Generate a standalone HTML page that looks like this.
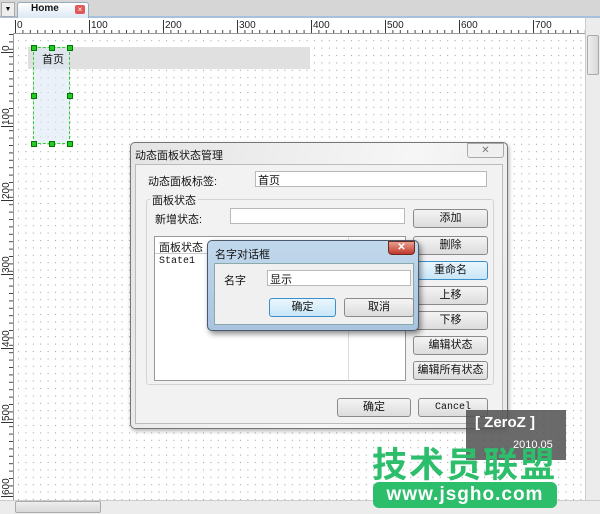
<!DOCTYPE html>
<html><head><meta charset="utf-8"><style>
*{margin:0;padding:0;box-sizing:border-box}
body{width:600px;height:514px;overflow:hidden;position:relative;background:#fff;font-family:"Liberation Sans","Noto Sans CJK SC",sans-serif;font-size:11px;color:#111}
.a{position:absolute}
.btn{position:absolute;border:1px solid #8a8a8a;border-radius:3px;background:linear-gradient(#f4f4f4,#dcdcdc);text-align:center;font-size:11px;line-height:17px}
.inp{position:absolute;background:#fff;border:1px solid #b9b9b9}
</style></head><body>
<div class="a" style="left:0;top:0;width:600px;height:17px;background:#d6d6d6"></div>
<div class="a" style="left:0;top:16px;width:600px;height:2px;background:#a9c0dc"></div>
<div class="a" style="left:1px;top:2px;width:14px;height:15px;background:#eee;border:1px solid #aaa;font-size:7px;text-align:center;line-height:14px">▼</div>
<div class="a" style="left:17px;top:2px;width:72px;height:16px;background:linear-gradient(#fff,#dce8f5);border:1px solid #9ab;border-bottom:none;border-radius:3px 3px 0 0"></div>
<div class="a" style="left:31px;top:3px;font-weight:bold;font-size:10px">Home</div>
<div class="a" style="left:75px;top:5px;width:10px;height:9px;background:#e05a5a;border-radius:2px;color:#fff;font-size:8px;line-height:9px;text-align:center">×</div>
<svg class="a" style="left:0;top:18px" width="600" height="496">
<rect x="0" y="0" width="600" height="16" fill="#fff"/>
<rect x="0" y="0" width="14" height="496" fill="#fff"/>
<line x1="14" y1="15.5" x2="585" y2="15.5" stroke="#999"/>
<line x1="13.5" y1="15" x2="13.5" y2="482" stroke="#999"/>
<g stroke="#333">
<line x1="15.5" y1="2" x2="15.5" y2="15"/><line x1="89.5" y1="2" x2="89.5" y2="15"/><line x1="163.5" y1="2" x2="163.5" y2="15"/><line x1="237.5" y1="2" x2="237.5" y2="15"/><line x1="311.5" y1="2" x2="311.5" y2="15"/><line x1="385.5" y1="2" x2="385.5" y2="15"/><line x1="459.5" y1="2" x2="459.5" y2="15"/><line x1="533.5" y1="2" x2="533.5" y2="15"/>
<line x1="1" y1="34.5" x2="13" y2="34.5"/><line x1="1" y1="108.5" x2="13" y2="108.5"/><line x1="1" y1="182.5" x2="13" y2="182.5"/><line x1="1" y1="256.5" x2="13" y2="256.5"/><line x1="1" y1="330.5" x2="13" y2="330.5"/><line x1="1" y1="404.5" x2="13" y2="404.5"/><line x1="1" y1="478.5" x2="13" y2="478.5"/>
</g>
<defs>
<pattern id="tx" x="15" y="0" width="7.4" height="16" patternUnits="userSpaceOnUse"><line x1="0.5" y1="12" x2="0.5" y2="15" stroke="#444"/></pattern>
<pattern id="ty" x="0" y="16" width="14" height="7.4" patternUnits="userSpaceOnUse"><line x1="9" y1="0.5" x2="13" y2="0.5" stroke="#444"/></pattern>
<pattern id="dots" x="15" y="34" width="7.4" height="7.4" patternUnits="userSpaceOnUse"><rect x="3" y="3" width="1" height="1" fill="#999"/></pattern>
</defs>
<rect x="15" y="0" width="570" height="16" fill="url(#tx)"/>
<rect x="0" y="16" width="14" height="466" fill="url(#ty)"/>
<rect x="14" y="16" width="571" height="466" fill="url(#dots)"/>
<g font-size="10" fill="#222" font-family="Liberation Sans">
<text x="17" y="10">0</text><text x="91" y="10">100</text><text x="165" y="10">200</text><text x="239" y="10">300</text><text x="313" y="10">400</text><text x="387" y="10">500</text><text x="461" y="10">600</text><text x="535" y="10">700</text>
<text transform="translate(9,33) rotate(-90)">0</text>
<text transform="translate(9,107) rotate(-90)">100</text>
<text transform="translate(9,181) rotate(-90)">200</text>
<text transform="translate(9,255) rotate(-90)">300</text>
<text transform="translate(9,329) rotate(-90)">400</text>
<text transform="translate(9,403) rotate(-90)">500</text>
<text transform="translate(9,477) rotate(-90)">600</text>
</g>
</svg>
<div class="a" style="left:585px;top:18px;width:15px;height:482px;background:#ececec;border-left:1px solid #ccc"></div>
<div class="a" style="left:587px;top:35px;width:12px;height:40px;background:linear-gradient(90deg,#eee,#d8d8d8);border:1px solid #aaa;border-radius:2px"></div>
<div class="a" style="left:0;top:500px;width:600px;height:14px;background:#ececec;border-top:1px solid #ccc"></div>
<div class="a" style="left:15px;top:501px;width:86px;height:12px;background:linear-gradient(#eee,#d8d8d8);border:1px solid #aaa;border-radius:2px"></div>
<div class="a" style="left:28px;top:47px;width:282px;height:22px;background:#e0e0e0"></div>
<div class="a" style="left:33px;top:47px;width:37px;height:97px;background:rgba(220,232,245,.6);border:1px dashed #3c3"></div>
<div class="a" style="left:42px;top:51px;font-size:11px">首页</div>
<div class="a" style="left:31px;top:45px;width:6px;height:6px;background:#2c2;border:1px solid #070"></div>
<div class="a" style="left:49px;top:45px;width:6px;height:6px;background:#2c2;border:1px solid #070"></div>
<div class="a" style="left:67px;top:45px;width:6px;height:6px;background:#2c2;border:1px solid #070"></div>
<div class="a" style="left:31px;top:93px;width:6px;height:6px;background:#2c2;border:1px solid #070"></div>
<div class="a" style="left:67px;top:93px;width:6px;height:6px;background:#2c2;border:1px solid #070"></div>
<div class="a" style="left:31px;top:141px;width:6px;height:6px;background:#2c2;border:1px solid #070"></div>
<div class="a" style="left:49px;top:141px;width:6px;height:6px;background:#2c2;border:1px solid #070"></div>
<div class="a" style="left:67px;top:141px;width:6px;height:6px;background:#2c2;border:1px solid #070"></div>
<div class="a" style="left:130px;top:142px;width:378px;height:287px;background:linear-gradient(110deg,#e4e4e4,#f6f6f6 60%,#e8e8e8);border:1px solid #777;border-radius:5px;box-shadow:1px 2px 4px rgba(0,0,0,.3)"></div>
<div class="a" style="left:135px;top:147px;font-size:11px">动态面板状态管理</div>
<div class="a" style="left:467px;top:143px;width:37px;height:15px;border:1px solid #aaa;border-radius:0 0 3px 3px;background:#f0f0f0;color:#777;text-align:center;font-size:10px;line-height:13px">✕</div>
<div class="a" style="left:135px;top:164px;width:368px;height:260px;background:#f2f2f2;border:1px solid #bbb"></div>
<div class="a" style="left:148px;top:173px">动态面板标签:</div>
<div class="inp" style="left:255px;top:171px;width:232px;height:16px"></div>
<div class="a" style="left:258px;top:172px">首页</div>
<div class="a" style="left:146px;top:199px;width:348px;height:186px;border:1px solid #d4d4d4;border-radius:3px"></div>
<div class="a" style="left:150px;top:192px;background:#f2f2f2;padding:0 2px">面板状态</div>
<div class="a" style="left:155px;top:211px">新增状态:</div>
<div class="inp" style="left:230px;top:208px;width:175px;height:16px"></div>
<div class="btn" style="left:413px;top:209px;width:75px;height:19px">添加</div>
<div class="inp" style="left:154px;top:236px;width:252px;height:145px;border-color:#999"></div>
<div class="a" style="left:155px;top:237px;width:250px;height:17px;border-bottom:1px solid #ccc"></div>
<div class="a" style="left:348px;top:237px;width:1px;height:143px;background:#ddd"></div>
<div class="a" style="left:159px;top:239px">面板状态</div>
<div class="a" style="left:159px;top:256px;font-family:'Liberation Mono',monospace;font-size:10px">State1</div>
<div class="btn" style="left:413px;top:236px;width:75px;height:19px">删除</div>
<div class="btn" style="left:413px;top:261px;width:75px;height:19px;border-color:#3c8fc9;background:linear-gradient(#eaf6fd,#c8e6f8)">重命名</div>
<div class="btn" style="left:413px;top:286px;width:75px;height:19px">上移</div>
<div class="btn" style="left:413px;top:311px;width:75px;height:19px">下移</div>
<div class="btn" style="left:413px;top:336px;width:75px;height:19px">编辑状态</div>
<div class="btn" style="left:413px;top:361px;width:75px;height:19px">编辑所有状态</div>
<div class="btn" style="left:337px;top:398px;width:74px;height:19px">确定</div>
<div class="btn" style="left:418px;top:398px;width:70px;height:19px;font-family:'Liberation Mono',monospace;font-size:10px">Cancel</div>
<div class="a" style="left:207px;top:240px;width:212px;height:91px;background:linear-gradient(#c2d8ec,#a9c4e0);border:1px solid #4a5a6a;border-radius:5px;box-shadow:2px 3px 6px rgba(0,0,0,.45)"></div>
<div class="a" style="left:215px;top:246px">名字对话框</div>
<div class="a" style="left:388px;top:241px;width:27px;height:14px;background:linear-gradient(#e8a090,#c0392b);border:1px solid #6a2a20;border-radius:0 0 4px 4px;color:#fff;text-align:center;font-size:10px;font-weight:bold;line-height:12px">✕</div>
<div class="a" style="left:214px;top:263px;width:200px;height:62px;background:#f0f0f0;border:1px solid #8aa"></div>
<div class="a" style="left:224px;top:272px">名字</div>
<div class="inp" style="left:267px;top:270px;width:144px;height:16px"></div>
<div class="a" style="left:270px;top:271px">显示</div>
<div class="btn" style="left:269px;top:298px;width:67px;height:19px;border-color:#3c8fc9;background:linear-gradient(#eaf6fd,#c8e6f8)">确定</div>
<div class="btn" style="left:344px;top:298px;width:70px;height:19px">取消</div>
<div class="a" style="left:466px;top:410px;width:100px;height:50px;background:rgba(80,80,80,.85)"></div>
<div class="a" style="left:475px;top:414px;color:#fff;font-weight:bold;font-size:15px">[ ZeroZ ]</div>
<div class="a" style="left:513px;top:439px;color:#fff;font-size:11px">2010.05</div>
<div class="a" style="left:372px;top:444px;color:#2dbe6c;font-weight:bold;font-size:35px;line-height:38px;letter-spacing:2px;font-family:'Noto Sans CJK SC',sans-serif">技术员联盟</div>
<div class="a" style="left:373px;top:482px;width:184px;height:26px;background:#2dbe6c;border-radius:6px;color:#fff;font-weight:bold;font-size:19px;line-height:26px;text-align:center;letter-spacing:1px">www.jsgho.com</div>
</body></html>
